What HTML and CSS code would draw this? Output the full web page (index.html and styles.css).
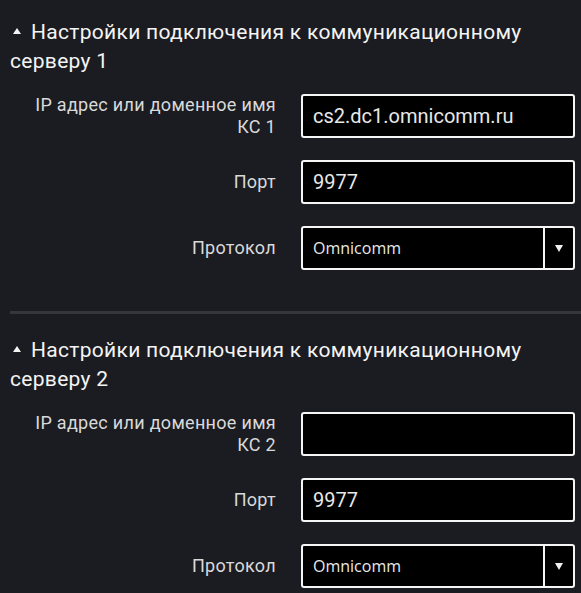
FILE: index.html
```html
<!DOCTYPE html>
<html lang="ru">
<head>
  <meta charset="UTF-8">
  <meta name="viewport" content="width=device-width, initial-scale=1.0">
  <title>Настройки подключения</title>
  <link rel="stylesheet" href="styles.css">
</head>
<body>

  <section class="settings-group">
    <h2 class="group-title"><span class="caret"></span>Настройки подключения к коммуникационному серверу 1</h2>
    <div class="form-row">
      <label class="form-label" for="host1">IP адрес или доменное имя КС 1</label>
      <input type="text" class="form-input" id="host1" value="cs2.dc1.omnicomm.ru">
    </div>
    <div class="form-row">
      <label class="form-label" for="port1">Порт</label>
      <input type="text" class="form-input" id="port1" value="9977">
    </div>
    <div class="form-row">
      <label class="form-label">Протокол</label>
      <div class="form-select">
        <span class="select-value">Omnicomm</span>
        <span class="select-arrow"></span>
      </div>
    </div>
  </section>

  <hr class="group-divider">

  <section class="settings-group">
    <h2 class="group-title"><span class="caret"></span>Настройки подключения к коммуникационному серверу 2</h2>
    <div class="form-row">
      <label class="form-label" for="host2">IP адрес или доменное имя КС 2</label>
      <input type="text" class="form-input" id="host2" value="">
    </div>
    <div class="form-row">
      <label class="form-label" for="port2">Порт</label>
      <input type="text" class="form-input" id="port2" value="9977">
    </div>
    <div class="form-row">
      <label class="form-label">Протокол</label>
      <div class="form-select">
        <span class="select-value">Omnicomm</span>
        <span class="select-arrow"></span>
      </div>
    </div>
  </section>

</body>
</html>
```

FILE: styles.css
```css
* {
  box-sizing: border-box;
}

body {
  margin: 0;
  background-color: #1b1c21;
  font-family: 'Roboto', sans-serif;
  color: #d9d9d9;
}

.settings-group {
  display: flex;
  flex-direction: column;
  gap: 22px;
  padding: 18px 6px 0 10px;
}

.group-title {
  margin: 0 0 -4px 0;
  font-size: 21px;
  font-weight: 400;
  line-height: 29px;
  letter-spacing: 0.3px;
  color: #f4f4f4;
}

.caret {
  display: inline-block;
  width: 0;
  height: 0;
  margin: 0 10px 4px 3px;
  border-left: 4px solid transparent;
  border-right: 4px solid transparent;
  border-bottom: 6px solid #f4f4f4;
  vertical-align: middle;
}

.form-row {
  display: flex;
  align-items: center;
  gap: 25px;
}

.form-label {
  width: 266px;
  padding-left: 20px;
  text-align: right;
  font-size: 18px;
  line-height: 22px;
  letter-spacing: 0.3px;
}

.form-input,
.form-select {
  width: 274px;
  height: 44px;
  background-color: #000;
  border: 2px solid #f5f5f5;
  border-radius: 3px;
  color: #e8e8e8;
}

.form-input {
  padding: 0 10px;
  font-family: 'Roboto', sans-serif;
  font-size: 20px;
  outline: none;
}

.form-select {
  display: flex;
  align-items: center;
}

.select-value {
  flex: 1;
  padding-left: 10px;
  font-family: 'Open Sans', sans-serif;
  font-size: 16px;
}

.select-arrow {
  position: relative;
  width: 30px;
  height: 100%;
  border-left: 2px solid #f5f5f5;
}

.select-arrow::after {
  content: '';
  position: absolute;
  left: 10px;
  top: 17px;
  border-left: 4px solid transparent;
  border-right: 4px solid transparent;
  border-top: 7px solid #f0f0f0;
}

.group-divider {
  margin: 41px 0 4px 10px;
  height: 3px;
  border: none;
  background-color: #35363b;
}
```
